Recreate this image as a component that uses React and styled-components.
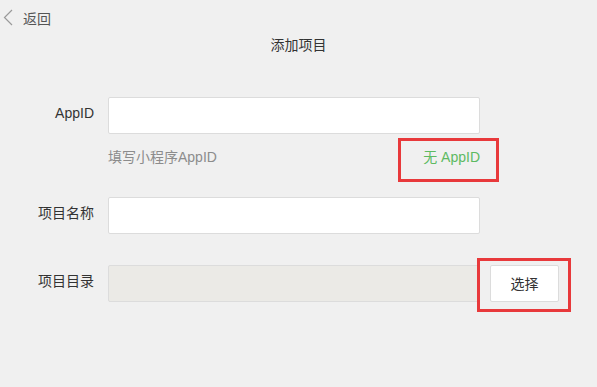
import React from "react";
import styled, { createGlobalStyle } from "styled-components";

const GlobalStyle = createGlobalStyle`
  body {
    margin: 0;
    background: #f0f0f0;
    font-family: "Liberation Sans", "Noto Sans CJK SC", sans-serif;
    font-size: 14px;
    color: #333;
  }
`;

const Page = styled.div`
  width: 597px;
  height: 387px;
  background: #f0f0f0;
  overflow: hidden;
`;

const TopBar = styled.div`
  height: 35px;
  display: flex;
  align-items: center;
  padding-left: 3px;
  color: #555;
  cursor: pointer;
`;

const BackText = styled.span`
  margin-left: 9px;
`;

const Title = styled.div`
  text-align: center;
  line-height: 20px;
  color: #333;
`;

const Form = styled.div`
  margin-top: 42px;
  display: flex;
  flex-direction: column;
`;

const Row = styled.div`
  display: flex;
  align-items: flex-start;
  margin-top: ${(p) => p.$gap || 0}px;
`;

const Label = styled.div`
  width: 94px;
  margin-right: 14px;
  text-align: right;
  line-height: 20px;
  padding-top: 6px;
  color: #333;
`;

const Input = styled.input`
  box-sizing: border-box;
  width: 372px;
  height: 37px;
  border: 1px solid #dcdcdc;
  border-radius: 2px;
  background: ${(p) => (p.disabled ? "#ebeae6" : "#fff")};
  outline: none;
  font: inherit;
  padding: 0 10px;
`;

const HintRow = styled.div`
  display: flex;
  justify-content: space-between;
  align-items: center;
  width: 372px;
  margin-left: 108px;
  margin-top: 13px;
  line-height: 20px;
`;

const Hint = styled.span`
  color: #8c8c8c;
`;

const Marked = styled.span`
  position: relative;
  display: block;
  line-height: 20px;
  &::after {
    content: "";
    position: absolute;
    top: ${(p) => p.$t}px;
    left: ${(p) => p.$l}px;
    right: ${(p) => p.$r}px;
    bottom: ${(p) => p.$b}px;
    border: 3px solid #e8393b;
    pointer-events: none;
  }
`;

const NoAppId = styled.span`
  display: block;
  color: #5dba62;
  cursor: pointer;
`;

const ChooseButton = styled.button`
  box-sizing: border-box;
  width: 69px;
  height: 37px;
  margin-left: 10px;
  border: 1px solid #dcdcdc;
  border-radius: 2px;
  background: #fff;
  font: inherit;
  color: #333;
  cursor: pointer;
  display: block;
`;

const Chevron = () => (
  <svg width="11" height="17" viewBox="0 0 11 17">
    <polyline points="9,1 1.5,8.5 9,16" fill="none" stroke="#9a9a9a" strokeWidth="1.2" />
  </svg>
);

export default function App() {
  return (
    <Page>
      <GlobalStyle />
      <TopBar>
        <Chevron />
        <BackText>返回</BackText>
      </TopBar>
      <Title>添加项目</Title>
      <Form>
        <Row>
          <Label>AppID</Label>
          <Input />
        </Row>
        <HintRow>
          <Hint>填写小程序AppID</Hint>
          <Marked $t={-9} $l={-25} $r={-19} $b={-15}>
            <NoAppId>无 AppID</NoAppId>
          </Marked>
        </HintRow>
        <Row $gap={30}>
          <Label>项目名称</Label>
          <Input />
        </Row>
        <Row $gap={31}>
          <Label>项目目录</Label>
          <Input disabled />
          <Marked $t={-7} $l={-3} $r={-12} $b={-10}>
            <ChooseButton>选择</ChooseButton>
          </Marked>
        </Row>
      </Form>
    </Page>
  );
}
